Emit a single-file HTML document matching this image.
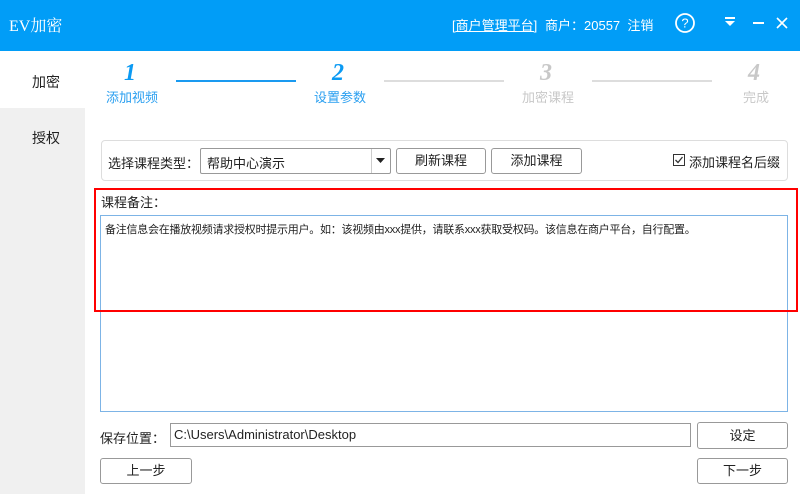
<!DOCTYPE html>
<html><head><meta charset="utf-8"><style>
*{margin:0;padding:0;box-sizing:border-box}
body{width:800px;height:494px;overflow:hidden;background:#fff;font-family:"Liberation Sans","Noto Sans CJK SC",sans-serif;font-size:12px;color:#222;position:relative}
.a{position:absolute;white-space:nowrap}
.bar{left:0;top:0;width:800px;height:51px;background:#019df7}
.w{color:#fff}
.side{left:0;top:108px;width:85px;height:386px;background:#f0f0f0}
.num{font-family:"Liberation Serif",serif;font-style:italic;font-weight:bold;font-size:24px}
.ln{height:2px}
.btn{border:1px solid #999;border-radius:3px;background:#fff;text-align:center;font-size:13px}
</style></head><body>
<div class="a bar"></div>
<div class="a w" style="left:9px;top:13px;font-size:16px;font-family:'Liberation Serif','Noto Serif CJK SC',serif">EV加密</div>
<div class="a w" style="left:452px;top:15px;font-size:13px;text-decoration:underline">[商户管理平台]</div>
<div class="a w" style="left:545px;top:15px;font-size:13px">商户：20557&nbsp;&nbsp;注销</div>
<svg class="a" style="left:674px;top:12px" width="22" height="22" viewBox="0 0 22 22"><circle cx="11" cy="11" r="9" fill="none" stroke="#fff" stroke-width="1.8"/><text x="11" y="15.5" fill="#fff" font-size="13" text-anchor="middle" font-family="Liberation Sans">?</text></svg>
<svg class="a" style="left:724px;top:17px" width="12" height="10"><rect x="1" y="0" width="10" height="2" fill="#fff"/><path d="M1 4H11L6 9Z" fill="#fff"/></svg>
<div class="a" style="left:753px;top:22px;width:11px;height:2px;background:#fff"></div>
<svg class="a" style="left:776px;top:17px" width="12" height="12"><path d="M1 1L11 11M11 1L1 11" stroke="#fff" stroke-width="1.6"/></svg>
<div class="a side"></div>
<div class="a" style="left:32px;top:72px;font-size:14px">加密</div>
<div class="a" style="left:32px;top:128px;font-size:14px">授权</div>

<div class="a num" style="left:124px;top:60px;color:#0b9af3">1</div>
<div class="a" style="left:106px;top:87px;font-size:13px;color:#2a9ff0">添加视频</div>
<div class="a ln" style="left:176px;top:80px;width:120px;background:#1a9af0"></div>
<div class="a num" style="left:332px;top:60px;color:#0b9af3">2</div>
<div class="a" style="left:314px;top:87px;font-size:13px;color:#2a9ff0">设置参数</div>
<div class="a ln" style="left:384px;top:80px;width:120px;background:#ddd"></div>
<div class="a num" style="left:540px;top:60px;color:#c8c8c8">3</div>
<div class="a" style="left:522px;top:87px;font-size:13px;color:#c8c8c8">加密课程</div>
<div class="a ln" style="left:592px;top:80px;width:120px;background:#ddd"></div>
<div class="a num" style="left:748px;top:60px;color:#c8c8c8">4</div>
<div class="a" style="left:743px;top:87px;font-size:13px;color:#c8c8c8">完成</div>

<div class="a" style="left:101px;top:140px;width:687px;height:41px;border:1px solid #ddd;border-radius:4px"></div>
<div class="a" style="left:108px;top:153px;font-size:13px">选择课程类型：</div>
<div class="a" style="left:200px;top:148px;width:191px;height:26px;border:1px solid #999;border-radius:2px"></div>
<div class="a" style="left:371px;top:149px;width:1px;height:24px;background:#ccc"></div>
<svg class="a" style="left:376px;top:158px" width="10" height="6"><path d="M0 0H9L4.5 5Z" fill="#222"/></svg>
<div class="a" style="left:207px;top:153px;font-size:13px">帮助中心演示</div>
<div class="a btn" style="left:396px;top:148px;width:90px;height:26px;line-height:24px">刷新课程</div>
<div class="a btn" style="left:491px;top:148px;width:91px;height:26px;line-height:24px">添加课程</div>
<div class="a" style="left:673px;top:154px;width:12px;height:12px;border:1px solid #333"></div>
<svg class="a" style="left:674px;top:155px" width="10" height="10"><path d="M1.5 5L4 7.5L8.5 2" stroke="#333" stroke-width="1.3" fill="none"/></svg>
<div class="a" style="left:689px;top:152px;font-size:13px">添加课程名后缀</div>

<div class="a" style="left:101px;top:192px;font-size:13px">课程备注：</div>
<div class="a" style="left:100px;top:215px;width:688px;height:197px;border:1px solid #7db4e6"></div>
<div class="a" style="left:105px;top:221px;font-size:11px;letter-spacing:-0.25px">备注信息会在播放视频请求授权时提示用户。如：该视频由xxx提供，请联系xxx获取受权码。该信息在商户平台，自行配置。</div>
<div class="a" style="left:94px;top:188px;width:704px;height:124px;border:2px solid #f00"></div>

<div class="a" style="left:100px;top:428px;font-size:13px">保存位置：</div>
<div class="a" style="left:170px;top:423px;width:521px;height:24px;border:1px solid #999"></div>
<div class="a" style="left:174px;top:427px;font-size:13px">C:\Users\Administrator\Desktop</div>
<div class="a btn" style="left:697px;top:422px;width:91px;height:27px;line-height:25px">设定</div>
<div class="a btn" style="left:100px;top:458px;width:92px;height:26px;line-height:24px">上一步</div>
<div class="a btn" style="left:697px;top:458px;width:91px;height:26px;line-height:24px">下一步</div>
</body></html>
